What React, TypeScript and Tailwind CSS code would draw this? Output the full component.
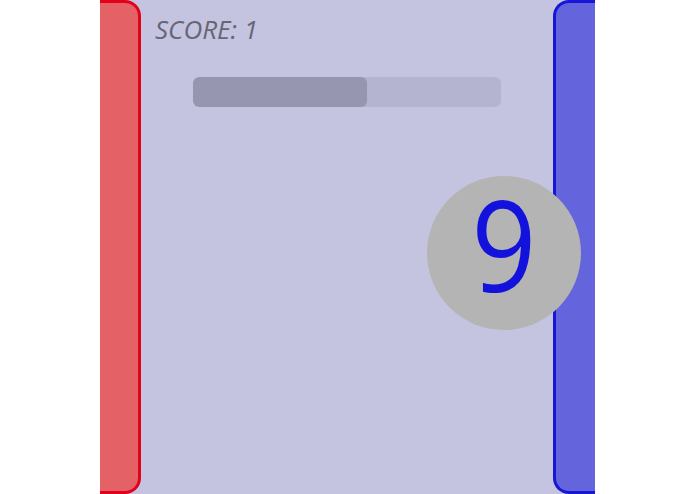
export default function App() {
  const progress = 56.4

  return (
    <div className="flex h-[494px] w-full justify-center bg-white" style={{ fontFamily: '"Open Sans", "Noto Sans", sans-serif' }}>
      <div className="relative flex h-full w-[495px] overflow-hidden bg-[#c4c4e0]">
        {/* left paddle */}
        <div className="h-full w-[41px] shrink-0 rounded-r-[16px] border-y-[3px] border-r-[3px] border-[#e2001a] bg-[#e46166]" />

        {/* playfield */}
        <div className="flex flex-1 flex-col">
          <div className="pl-[14px] pt-[12px] text-[26px] leading-[34px] italic text-[#666674]">SCORE: 1</div>
          <div className="mt-[31px] flex justify-center">
            <div className="h-[30px] w-[308px] overflow-hidden rounded-[6px] bg-[#b4b4d0]">
              <div className="h-full rounded-[6px] bg-[#9696b0]" style={{ width: `${progress}%` }} />
            </div>
          </div>
        </div>

        {/* right paddle */}
        <div className="h-full w-[42px] shrink-0 rounded-l-[16px] border-y-[3px] border-l-[3px] border-[#1616d6] bg-[#6464dc]" />

        {/* countdown bubble */}
        <div className="absolute left-[327px] top-[176px] flex h-[154px] w-[154px] items-center justify-center rounded-full bg-[#b4b4b4]">
          <span className="mb-[20px] inline-block scale-x-[0.9] text-[126px] leading-none font-normal text-[#1212dc]">9</span>
        </div>
      </div>
    </div>
  )
}
